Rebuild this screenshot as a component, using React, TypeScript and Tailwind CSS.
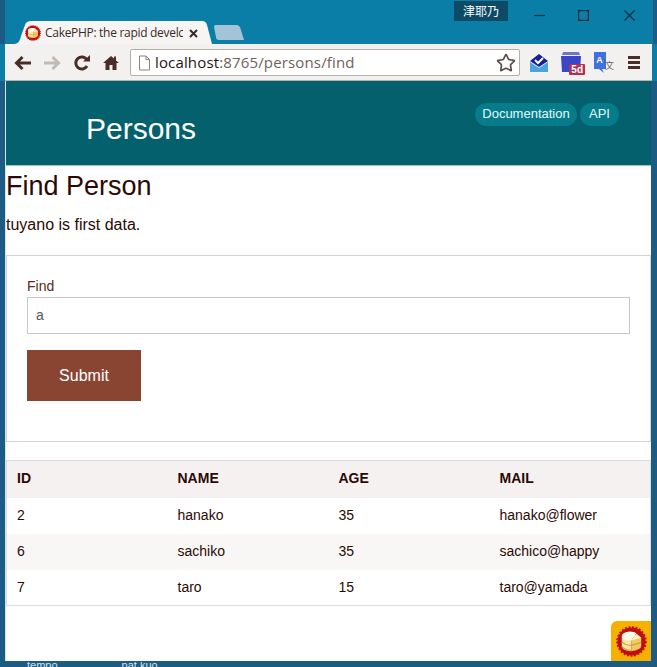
import { Star } from "lucide-react";

const rows = [
  { id: 2, name: "hanako", age: 35, mail: "hanako@flower" },
  { id: 6, name: "sachiko", age: 35, mail: "sachico@happy" },
  { id: 7, name: "taro", age: 15, mail: "taro@yamada" },
];

const CakeIcon = ({ size }: { size: number }) => (
  <svg width={size} height={size} viewBox="0 0 32 32">
    <circle cx="16" cy="16" r="14.5" fill="#c00f12" stroke="#c00f12" strokeWidth="2.5" strokeDasharray="2 1.6" />
    <path d="M6 11 C6 8 10 6 15 6 C17 6 19 6.5 21 7.5 L16 14 V26 C10 26 6 24 6 21 Z" fill="#f6e6a6" />
    <path d="M6 11 C6 13.5 10 15 16 15 L21 7.5 C19 6.5 17 6 15 6 C10 6 6 8 6 11 Z" fill="#fffbe8" />
    <path d="M16 15 L21 8 L26 12 V21 C26 23 22 25.5 16 26 Z" fill="#f2c860" />
    <path d="M21 8 L26 12 L16 15 Z" fill="#fdf3c4" />
    <path d="M6 16 C8 19 12 20 16 20 M6 21 C8 24 12 25 16 25 M16 20 L26 17" stroke="#cf9f30" strokeWidth="1.2" fill="none" />
  </svg>
);

const App = () => {
  return (
    <div className="w-[657px] h-[667px] overflow-hidden flex flex-col bg-[#0a7ea6] font-['Liberation_Sans',Arial,sans-serif] text-[#2b0a05]">
      {/* title bar + tabs */}
      <div className="h-[44px] shrink-0 flex items-end pl-[14px] border-l-[5px] border-r-[4px] border-[#1c5b84] relative">
        <div className="relative w-[198px] h-[23px] -ml-[5px] flex items-center pl-[11px] pt-[1px]">
          <svg className="absolute inset-0" width="198" height="23" viewBox="0 0 198 23">
            <path d="M0 23 C5 23 6 19 7 15 L11 4 C12 1 14 0 17 0 H188 C191 0 192 1 193 4 L198 23 Z" fill="#f7f5f4" />
          </svg>
          <span className="relative"><CakeIcon size={16} /></span>
          <span className="relative ml-[4px] w-[138px] overflow-hidden whitespace-nowrap text-[12px] text-[#3a2a28] font-['Open_Sans',sans-serif] tracking-[-0.3px]">
            CakePHP: the rapid develc
          </span>
          <svg className="relative ml-[6px]" width="9" height="9" viewBox="0 0 9 9">
            <path d="M1 1 L8 8 M8 1 L1 8" stroke="#3a2a28" strokeWidth="2" />
          </svg>
        </div>
        <svg className="ml-[1px] mb-[4px]" width="32" height="15" viewBox="0 0 32 15">
          <path d="M1 2 C1 0.5 2 0 3 0 H24 C25 0 26 1 27 2 L31 15 H6 C4 15 3 14 3 12 Z" fill="#a3c3d6" />
        </svg>
        <div className="absolute top-[1px] left-[449px] w-[54px] h-[20px] bg-[#0d4a66] text-white text-[12px] flex items-center justify-center font-['Noto_Sans_CJK_JP',sans-serif]">
          津耶乃
        </div>
        <svg className="absolute top-[10px] left-[529px]" width="11" height="11" viewBox="0 0 11 11">
          <path d="M0 5.5 H11" stroke="#12303f" strokeWidth="1.2" />
        </svg>
        <svg className="absolute top-[10px] left-[573px]" width="11" height="11" viewBox="0 0 11 11">
          <rect x="0.6" y="0.6" width="9.8" height="9.8" fill="none" stroke="#12303f" strokeWidth="1.2" />
        </svg>
        <svg className="absolute top-[10px] left-[619px]" width="11" height="11" viewBox="0 0 11 11">
          <path d="M0.5 0.5 L10.5 10.5 M10.5 0.5 L0.5 10.5" stroke="#12303f" strokeWidth="1.2" />
        </svg>
      </div>

      {/* chrome toolbar */}
      <div className="h-[37px] shrink-0 ml-[5px] mr-[5px] pt-[1px] bg-[#f3f1f0] flex items-center border-b border-[#b8b4b2]">
        <svg className="ml-[9px]" width="18" height="16" viewBox="0 0 18 16">
          <path d="M17 8 H3 M8.5 2 L2.5 8 L8.5 14" stroke="#4a2c28" strokeWidth="3" fill="none" />
        </svg>
        <svg className="ml-[11px]" width="18" height="16" viewBox="0 0 18 16">
          <path d="M1 8 H15 M9.5 2 L15.5 8 L9.5 14" stroke="#c2bab6" strokeWidth="3" fill="none" />
        </svg>
        <svg className="ml-[12px]" width="18" height="18" viewBox="0 0 18 18">
          <path d="M14 12 A6 6 0 1 1 14 6" stroke="#4a2c28" strokeWidth="3" fill="none" />
          <path d="M10 7.5 H17 V1 Z" fill="#4a2c28" />
        </svg>
        <svg className="ml-[12px]" width="16" height="16" viewBox="0 0 16 16">
          <path d="M8 1 L11 3.6 V1.5 H13 V5.4 L16 8 H13.5 V15 H9.5 V10 H6.5 V15 H2.5 V8 H0 Z" fill="#4a2c28" />
        </svg>
        <div className="ml-[11px] w-[390px] h-[27px] bg-white border border-[#b5aeaa] rounded-[2px] flex items-center pl-[6px] pr-[3px]">
          <svg width="15" height="16" viewBox="0 0 15 16">
            <path d="M2.5 1 H9 L12.5 4.5 V15 H2.5 Z M9 1 V4.5 H12.5" fill="none" stroke="#8a8280" strokeWidth="1" />
          </svg>
          <span className="ml-[3px] text-[15px] text-[#1f1412] font-['Open_Sans',sans-serif] tracking-[0.15px]">
            localhost<span className="text-[#6f5f5c]">:8765/persons/find</span>
          </span>
          <Star className="ml-auto text-[#5f4a47]" size={20} strokeWidth={2} />
        </div>
        <svg className="ml-[9px]" width="20" height="20" viewBox="0 0 20 20">
          <path d="M1 8 L10 1 L19 8 L10 14 Z" fill="#14209a" />
          <path d="M1 9 L10 15 L19 9 V19 H1 Z" fill="#4aa3dc" />
          <path d="M6 7 L9 10 L14 5" stroke="#fff" strokeWidth="2" fill="none" />
        </svg>
        <div className="relative ml-[12px] w-[24px] h-[24px]">
          <svg width="20" height="21" viewBox="0 0 20 21">
            <path d="M1 4 L2 1 H18 L19 4 Z" fill="#6f78c8" />
            <path d="M0 5 H20 L19 21 H1 Z" fill="#3a46c8" />
          </svg>
          <span className="absolute right-0 bottom-0 bg-[#b52f55] text-white text-[10px] font-bold leading-[11px] px-[2px] rounded-[1px]">5d</span>
        </div>
        <div className="relative ml-[8px] w-[22px] h-[24px]">
          <svg className="absolute left-0 top-[1px]" width="14" height="21" viewBox="0 0 14 21">
            <path d="M1 0 H13 V17 H9 L11 21 L6 17 H1 Z" fill="#3f6fe0" />
          </svg>
          <span className="absolute left-0 top-[4px] w-[13px] text-center text-white text-[9px] leading-[11px] font-bold">A</span>
          <span className="absolute left-[12px] top-[9px] text-[9px] leading-[12px] text-[#666] font-['Noto_Sans_CJK_JP',sans-serif]">文</span>
        </div>
        <div className="ml-[13px] w-[12px] flex flex-col gap-[2px]">
          <div className="h-[3px] bg-[#4a2c28]" />
          <div className="h-[3px] bg-[#4a2c28]" />
          <div className="h-[3px] bg-[#4a2c28]" />
        </div>
      </div>

      {/* page */}
      <div className="flex-1 min-h-0 flex flex-col bg-[#1c5b84] pl-[5px] pr-[6px] pb-[6px]">
        <div className="relative flex-1 min-h-0 bg-white border-l border-[#cfe3ee] overflow-hidden">
          <div className="h-[85px] bg-[#04606c] flex justify-between items-start border-b border-[#9fc3c9]">
            <div className="ml-[80px] mt-[30px] text-[30px] leading-[36px] text-white">Persons</div>
            <div className="flex mt-[22px] mr-[32px] gap-[3px]">
              <span className="h-[23px] w-[102px] text-center rounded-full bg-[#067b8a] text-[#e2fbfb] text-[13px] leading-[22px]">Documentation</span>
              <span className="h-[23px] w-[39px] text-center rounded-full bg-[#067b8a] text-[#e2fbfb] text-[13px] leading-[22px]">API</span>
            </div>
          </div>

          <h1 className="text-[27px] leading-[32px] mt-[4px]">Find Person</h1>
          <p className="text-[16px] leading-[20px] mt-[13px]">tuyano is first data.</p>

          <form className="mt-[20px] border border-[#d3d3d3] h-[187px] pl-[20px] pr-[20px] pt-[22px]">
            <label className="block text-[14px] leading-[17px] text-[#5b2a20]">Find</label>
            <div className="mt-[2px] h-[37px] border border-[#c8c8c8] pl-[8px] flex items-center text-[14px] text-[#555]">a</div>
            <button type="button" className="mt-[16px] w-[114px] h-[51px] bg-[#8a4432] text-white text-[16px]">Submit</button>
          </form>

          <table className="mt-[18px] w-[645px] table-fixed border border-[#dcdcdc] text-[14px] border-collapse">
            <thead>
              <tr className="h-[37px] bg-[#f5f1f0] text-left font-bold">
                <th className="pl-[10px] pb-[1px] w-[161px]">ID</th>
                <th className="pl-[10px] pb-[1px] w-[161px]">NAME</th>
                <th className="pl-[10px] pb-[1px] w-[161px]">AGE</th>
                <th className="pl-[10px] pb-[1px] w-[161px]">MAIL</th>
              </tr>
            </thead>
            <tbody>
              {rows.map((r, i) => (
                <tr key={r.id} className={i === 1 ? "h-[36px] bg-[#f9f7f6]" : "h-[36px]"}>
                  <td className="pl-[10px]">{r.id}</td>
                  <td className="pl-[10px]">{r.name}</td>
                  <td className="pl-[10px]">{r.age}</td>
                  <td className="pl-[10px]">{r.mail}</td>
                </tr>
              ))}
            </tbody>
          </table>

          <div className="absolute right-0 bottom-0 w-[40px] h-[40px] bg-[#f6b000] rounded-tl-[6px] flex items-center justify-center">
            <CakeIcon size={31} />
          </div>
        </div>
        <div className="h-0 relative">
          <div className="absolute top-[1px] left-[22px] h-[6px] overflow-hidden text-[11px] leading-[6px] text-[#cfe3f0] flex gap-[64px]">
            <span>tempo</span>
            <span>pat kuo</span>
          </div>
        </div>
      </div>
    </div>
  );
};

export default App;
